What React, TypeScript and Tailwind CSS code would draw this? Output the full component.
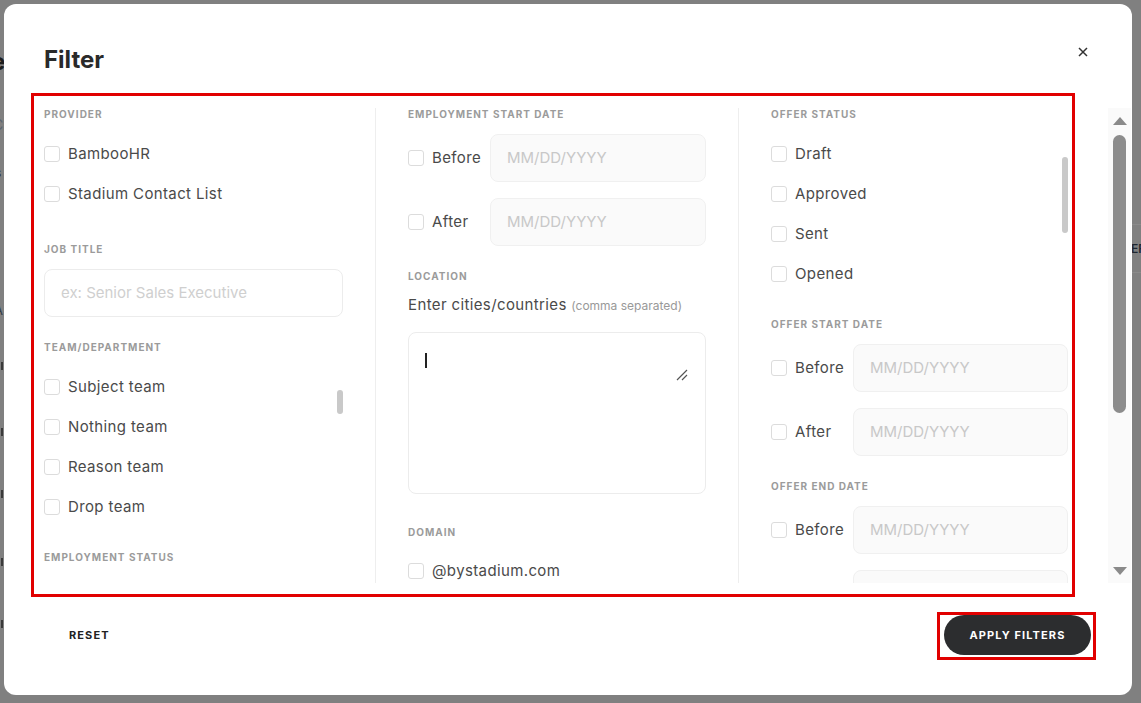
import React from "react";

const font = { fontFamily: "Inter, 'Noto Sans', sans-serif" };

function Box() {
  return <span className="block w-[16px] h-[16px] shrink-0 rounded-[3px] border border-[#dcdcdc] bg-white" />;
}

function Label({ children, className = "" }: { children: React.ReactNode; className?: string }) {
  return (
    <div className={"h-[12px] leading-[12px] text-[10px] font-bold tracking-[0.1em] text-[#9b9b9b] " + className}>
      {children}
    </div>
  );
}

function Check({ text }: { text: string }) {
  return (
    <div className="h-[40px] flex items-center gap-[8px]">
      <Box />
      <span className="text-[15px] tracking-[0.025em] text-[#4a4a4a] leading-[20px]">{text}</span>
    </div>
  );
}

function DateRow({ text, className = "" }: { text: string; className?: string }) {
  return (
    <div className={"flex items-center h-[48px] " + className}>
      <div className="w-[82px] shrink-0 flex items-center gap-[8px]">
        <Box />
        <span className="text-[15px] tracking-[0.025em] text-[#4a4a4a] leading-[20px]">{text}</span>
      </div>
      <div className="flex-1 h-[48px] rounded-[8px] border border-[#f0f0f0] bg-[#fafafa] flex items-center pl-[16px] text-[15px] text-[#c8c8c8]">
        MM/DD/YYYY
      </div>
    </div>
  );
}

export default function App() {
  return (
    <div style={font} className="relative w-[1141px] h-[703px] bg-[#808080] overflow-hidden pt-[4px] pl-[4px]">
      {/* background page fragments */}
      <span className="absolute left-[-9px] top-[44px] text-[24px] font-bold text-[#1e1e1e]">e</span>
      <span className="absolute left-[-7px] top-[114px] text-[14px] text-[#5b6570]">C</span>
      <span className="absolute left-[-5px] top-[164px] text-[12px] text-[#303030]">s</span>
      <span className="absolute left-[-6px] top-[301px] text-[13px] text-[#303a44]">A</span>
      <span className="absolute left-[1px] top-[362px] w-[2px] h-[8px] bg-[#3a3a3a]" />
      <span className="absolute left-[1px] top-[428px] w-[2px] h-[8px] bg-[#3a3a3a]" />
      <span className="absolute left-[1px] top-[490px] w-[2px] h-[8px] bg-[#3a3a3a]" />
      <span className="absolute left-[1px] top-[558px] w-[2px] h-[8px] bg-[#3a3a3a]" />
      <span className="absolute left-[1px] top-[620px] w-[2px] h-[8px] bg-[#3a3a3a]" />
      <span className="absolute left-[1132px] top-[224px] w-[9px] h-[1px] bg-[#8a8a8a]" />
      <span className="absolute left-[1132px] top-[272px] w-[9px] h-[1px] bg-[#8a8a8a]" />
      <span className="absolute left-[1131px] top-[240px] text-[12px] font-semibold text-[#1e2630]">EF</span>

      {/* modal */}
      <div className="relative w-[1128px] h-[691px] bg-white rounded-[12px] flex flex-col overflow-hidden">
        {/* header */}
        <div className="h-[89px] flex items-start justify-between pl-[40px] pr-[44px] pt-[41px]">
          <h1 className="text-[24px] leading-[28px] font-bold text-[#2a2a2a] mt-[1px]">Filter</h1>
          <svg width="10" height="10" viewBox="0 0 10 10" className="mt-[2px]">
            <path d="M1 1L9 9M9 1L1 9" stroke="#333" strokeWidth="1.5" />
          </svg>
        </div>

        {/* body row */}
        <div className="flex items-start">
          <div className="ml-[27px] w-[1044px] h-[504px] border-[3px] border-[#e10000] pt-[12px] flex">
            {/* col 1 */}
            <div className="relative w-[341px] h-[475px] overflow-hidden pl-[10px] pr-[32px]">
              <Label>PROVIDER</Label>
              <div className="mt-[14px]">
                <Check text="BambooHR" />
                <Check text="Stadium Contact List" />
              </div>
              <Label className="mt-[29px]">JOB TITLE</Label>
              <div className="mt-[14px] h-[48px] rounded-[8px] border border-[#ececec] flex items-center pl-[16px] text-[15px] text-[#cfcfcf]">
                ex: Senior Sales Executive
              </div>
              <Label className="mt-[24px]">TEAM/DEPARTMENT</Label>
              <div className="mt-[14px]">
                <Check text="Subject team" />
                <Check text="Nothing team" />
                <Check text="Reason team" />
                <Check text="Drop team" />
              </div>
              <Label className="mt-[24px]">EMPLOYMENT STATUS</Label>
              <span className="absolute right-[32px] top-[282px] w-[6px] h-[24px] rounded-full bg-[#c9c9c9]" />
            </div>

            {/* col 2 */}
            <div className="w-[363px] h-[475px] overflow-hidden border-l border-[#eeeeee] pl-[32px] pr-[32px]">
              <Label>EMPLOYMENT START DATE</Label>
              <DateRow text="Before" className="mt-[14px]" />
              <DateRow text="After" className="mt-[16px]" />
              <Label className="mt-[24px]">LOCATION</Label>
              <div className="mt-[13px] h-[20px] leading-[20px] text-[15px] tracking-[0.025em] text-[#4a4a4a] whitespace-nowrap">
                Enter cities/countries <span className="text-[12px] tracking-normal text-[#999]">(comma separated)</span>
              </div>
              <div className="relative mt-[17px] h-[162px] rounded-[8px] border border-[#ececec] bg-white">
                <span className="absolute left-[16px] top-[20px] w-[2px] h-[15px] bg-[#222]" />
                <svg width="12" height="12" viewBox="0 0 12 12" className="absolute left-[267px] top-[36px]">
                  <path d="M1 11L11 1M6 11L11 6" stroke="#555" strokeWidth="1.2" />
                </svg>
              </div>
              <Label className="mt-[32px]">DOMAIN</Label>
              <div className="mt-[13px]">
                <Check text="@bystadium.com" />
              </div>
            </div>

            {/* col 3 */}
            <div className="relative flex-1 h-[475px] overflow-hidden border-l border-[#eeeeee] pl-[32px] pr-[4px]">
              <Label>OFFER STATUS</Label>
              <div className="mt-[14px]">
                <Check text="Draft" />
                <Check text="Approved" />
                <Check text="Sent" />
                <Check text="Opened" />
              </div>
              <Label className="mt-[24px]">OFFER START DATE</Label>
              <DateRow text="Before" className="mt-[14px]" />
              <DateRow text="After" className="mt-[16px]" />
              <Label className="mt-[24px]">OFFER END DATE</Label>
              <DateRow text="Before" className="mt-[14px]" />
              <DateRow text="After" className="mt-[16px]" />
              <span className="absolute right-[4px] top-[49px] w-[6px] h-[76px] rounded-full bg-[#c9c9c9]" />
            </div>
          </div>

          {/* page scrollbar */}
          <div className="ml-[33px] mt-[15px] w-[23px] h-[475px] bg-[#fafafa] flex flex-col items-center">
            <svg width="14" height="8" viewBox="0 0 14 8" className="mt-[9px]">
              <path d="M7 0L14 8H0Z" fill="#8a8a8a" />
            </svg>
            <div className="mt-[10px] w-[13px] h-[278px] rounded-full bg-[#8c8c8c]" />
            <div className="flex-1" />
            <svg width="14" height="8" viewBox="0 0 14 8" className="mb-[8px]">
              <path d="M0 0H14L7 8Z" fill="#8a8a8a" />
            </svg>
          </div>
        </div>

        {/* footer */}
        <div className="mt-[15px] flex items-center justify-between pl-[65px] pr-[36px]">
          <span className="text-[11px] font-bold tracking-[0.1em] text-[#222] -mt-[1px]">RESET</span>
          <div className="w-[159px] h-[48px] border-[3px] border-[#e10000] pl-[4px]">
            <div className="w-[147px] h-[40px] rounded-full bg-[#2c2d2f] flex items-center justify-center text-[11px] font-bold tracking-[0.1em] text-white">
              APPLY FILTERS
            </div>
          </div>
        </div>
      </div>
    </div>
  );
}
